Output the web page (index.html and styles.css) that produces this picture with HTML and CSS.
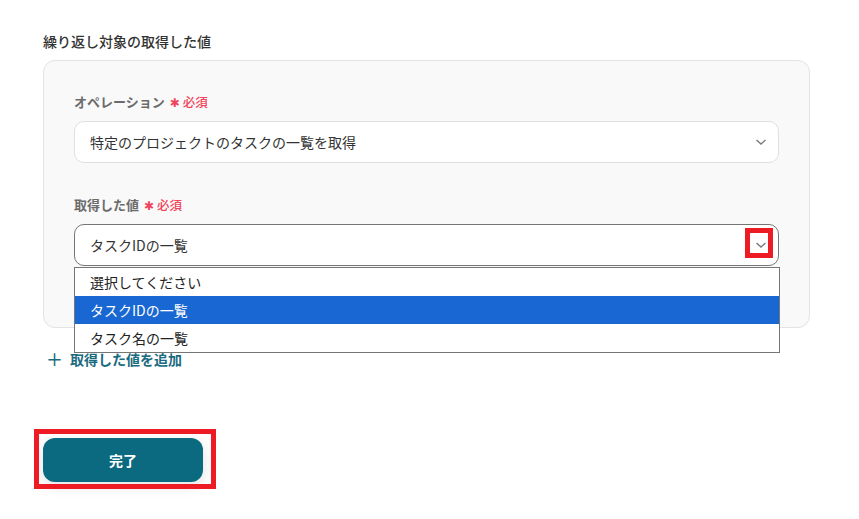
FILE: index.html
```html
<!DOCTYPE html>
<html lang="ja">
<head>
<meta charset="utf-8">
<link rel="stylesheet" href="styles.css">
</head>
<body>
<div class="page">
  <div class="title">繰り返し対象の取得した値</div>
  <div class="card">
    <div class="field">
      <div class="label">オペレーション<span class="req"><span class="ast">✱</span>必須</span></div>
      <div class="select">
        <span>特定のプロジェクトのタスクの一覧を取得</span>
        <svg class="chev" width="12" height="8" viewBox="0 0 12 8"><path d="M1.5 2 L6 6 L10.5 2" fill="none" stroke="#7a7a7a" stroke-width="1.4"/></svg>
      </div>
    </div>
    <div class="field field2">
      <div class="label">取得した値<span class="req"><span class="ast">✱</span>必須</span></div>
      <div class="select focused">
        <span>タスクIDの一覧</span>
        <svg class="chev" width="12" height="8" viewBox="0 0 12 8"><path d="M1.5 2 L6 6 L10.5 2" fill="none" stroke="#7a7a7a" stroke-width="1.4"/></svg>
        <div class="mark mark-chev"></div>
        <ul class="menu">
          <li>選択してください</li>
          <li class="active">タスクIDの一覧</li>
          <li>タスク名の一覧</li>
        </ul>
      </div>
    </div>
  </div>
  <div class="add"><span class="plus">＋</span>取得した値を追加</div>
  <div class="btn-wrap">
    <button class="done">完了</button>
    <div class="mark mark-btn"></div>
  </div>
</div>
</body>
</html>
```

FILE: styles.css
```css
* { box-sizing: border-box; }
html, body { margin: 0; padding: 0; background: #fff; }
body {
  font-family: "Noto Sans CJK JP", "Noto Sans", sans-serif;
  color: #333;
  width: 859px;
  height: 519px;
  overflow: hidden;
}
.page {
  padding: 31px 49px 0 43px;
}
.title {
  font-size: 14px;
  line-height: 20px;
  font-weight: 500;
  color: #333;
}
.card {
  margin-top: 9px;
  background: #f9f9f9;
  border: 1px solid #e3e3e3;
  border-radius: 12px;
  padding: 31px 30px 61px 30px;
}
.field2 { margin-top: 32px; }
.label {
  height: 20px;
  font-size: 13px;
  line-height: 20px;
  font-weight: 700;
  color: #6b6b6b;
  display: flex;
  align-items: center;
}
.req {
  margin-left: 5px;
  color: #f0445c;
  font-size: 12.5px;
  line-height: 20px;
  font-weight: 500;
  display: flex;
  align-items: center;
}
.ast {
  font-family: "DejaVu Sans", sans-serif;
  font-size: 12px;
  line-height: 12px;
  margin-right: 3px;
  position: relative;
  top: 1px;
}
.select {
  position: relative;
  margin-top: 9px;
  height: 42px;
  background: #fff;
  border: 1px solid #e0e0e0;
  border-radius: 10px;
  display: flex;
  align-items: center;
  justify-content: space-between;
  padding: 0 11px 0 15px;
  font-size: 14px;
  color: #333;
}
.select.focused { border-color: #767676; }
.chev { display: block; }
.menu {
  position: absolute;
  left: -1px;
  right: -2px;
  top: 42px;
  margin: 0;
  padding: 0;
  list-style: none;
  background: #fff;
  border: 1px solid #767676;
  z-index: 5;
}
.menu li {
  height: 28px;
  line-height: 28px;
  padding-left: 15px;
  font-size: 14px;
  color: #222;
}
.menu li.active { background: #1967d2; color: #fff; }
.mark {
  position: absolute;
  border: 5px solid #ed1c24;
  z-index: 6;
}
.mark-chev {
  right: 5px;
  top: 3px;
  width: 28px;
  height: 30px;
}
.add {
  margin-top: 21px;
  margin-left: 3px;
  font-size: 14px;
  line-height: 20px;
  font-weight: 700;
  color: #1b6b7f;
  display: flex;
  align-items: center;
}
.plus {
  font-size: 17px;
  margin-right: 7px;
  font-weight: 500;
}
.btn-wrap {
  position: relative;
  margin-top: 69px;
  width: 160px;
}
.done {
  display: block;
  width: 160px;
  height: 44px;
  border: none;
  border-radius: 12px;
  background: #0c6a80;
  color: #fff;
  font-family: inherit;
  font-size: 14px;
  font-weight: 700;
  box-shadow: 0 4px 14px rgba(0, 0, 0, 0.12);
}
.mark-btn {
  left: -9px;
  top: -9px;
  width: 182px;
  height: 60px;
}
```
